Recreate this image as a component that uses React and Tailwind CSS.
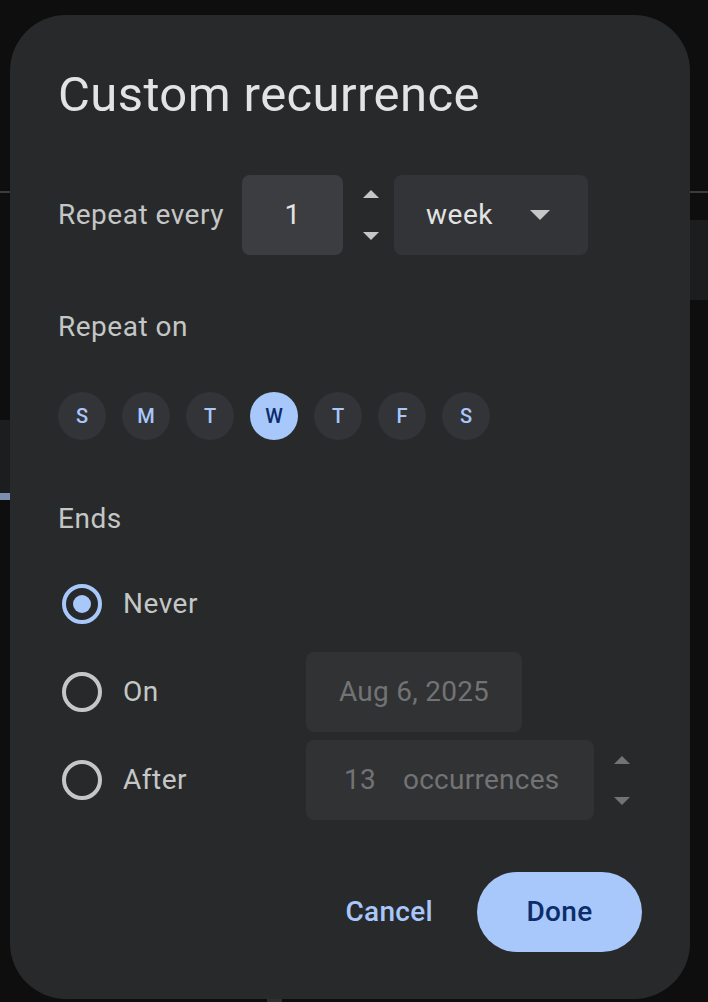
import React from "react";

const Tri = ({ up = false, w = 16, h = 8, color = "#c4c7c5" }) => (
  <svg width={w} height={h} viewBox={`0 0 ${w} ${h}`} className="block">
    {up ? (
      <polygon points={`0,${h} ${w / 2},0 ${w},${h}`} fill={color} />
    ) : (
      <polygon points={`0,0 ${w},0 ${w / 2},${h}`} fill={color} />
    )}
  </svg>
);

const Spinner = ({ color, gap }) => (
  <div className="flex flex-col items-center" style={{ gap }}>
    <Tri up color={color} />
    <Tri color={color} />
  </div>
);

const Radio = ({ checked }) => (
  <div className="w-[48px] h-[48px] shrink-0 flex items-center justify-center">
    {checked ? (
      <div className="w-[40px] h-[40px] rounded-full border-[4px] border-[#a8c7fa] flex items-center justify-center">
        <div className="w-[18px] h-[18px] rounded-full bg-[#a8c7fa]" />
      </div>
    ) : (
      <div className="w-[40px] h-[40px] rounded-full border-[4px] border-[#c4c7c5]" />
    )}
  </div>
);

const days = ["S", "M", "T", "W", "T", "F", "S"];

export default function App() {
  return (
    <div
      className="relative w-[708px] h-[1002px] bg-[#0e0e0e] overflow-hidden flex flex-col"
      style={{ fontFamily: "Roboto, 'Liberation Sans', sans-serif" }}
    >
      {/* background page behind the modal */}
      <div className="h-[191px]" />
      <div className="h-[2px] bg-[#3a3b3d]" />
      <div className="flex justify-between">
        <div className="w-[10px] mt-[227px] flex flex-col">
          <div className="h-[73px] bg-[#1c1d1f]" />
          <div className="h-[7px] bg-[#7d8db0]" />
        </div>
        <div className="w-[18px] mt-[27px] h-[80px] bg-[#1c1d1f]" />
      </div>
      <div className="mt-auto ml-[267px] w-[15px] h-[3px] bg-[#2e2f31]" />

      {/* modal dialog */}
      <div className="absolute left-[10px] top-[15px] w-[680px] h-[984px] rounded-[56px] bg-[#28292b] px-[48px] pt-[48px] flex flex-col tracking-[0.5px]">
        <div className="text-[49px] leading-[64px] tracking-[0.4px] text-[#e3e3e3]">Custom recurrence</div>

        <div className="mt-[48px] flex items-center h-[80px]">
          <div className="w-[184px] shrink-0 text-[28px] leading-[40px] text-[#c4c7c5]">Repeat every</div>
          <div className="w-[101px] shrink-0 h-[80px] rounded-[8px] bg-[#3c3d40] flex items-center justify-center text-[28px] text-[#e3e3e3]">
            1
          </div>
          <div className="w-[51px] shrink-0 flex justify-center pl-[4px]">
            <Spinner color="#c4c7c5" gap="34px" />
          </div>
          <div className="w-[194px] shrink-0 h-[80px] rounded-[8px] bg-[#333437] flex items-center pl-[32px] pr-[38px] justify-between">
            <span className="text-[28px] text-[#e3e3e3]">week</span>
            <Tri w={20} h={10} color="#c4c7c5" />
          </div>
        </div>

        <div className="mt-[52px] text-[28px] leading-[40px] text-[#c4c7c5]">Repeat on</div>

        <div className="mt-[45px] flex gap-[16px] tracking-normal">
          {days.map((d, i) =>
            i === 3 ? (
              <div
                key={i}
                className="w-[48px] h-[48px] rounded-full bg-[#a8c7fa] flex items-center justify-center text-[20px] font-medium text-[#0b2d6b]"
              >
                {d}
              </div>
            ) : (
              <div
                key={i}
                className="w-[48px] h-[48px] rounded-full bg-[#333437] flex items-center justify-center text-[20px] font-medium text-[#a8c7fa]"
              >
                {d}
              </div>
            )
          )}
        </div>

        <div className="mt-[59px] text-[28px] leading-[40px] text-[#c4c7c5]">Ends</div>

        <div className="mt-[25px] flex flex-col gap-[8px]">
          <div className="h-[80px] flex items-center">
            <Radio checked />
            <span className="ml-[17px] text-[28px] text-[#c4c7c5]">Never</span>
          </div>
          <div className="h-[80px] flex items-center">
            <Radio />
            <span className="ml-[17px] w-[183px] shrink-0 text-[28px] text-[#c4c7c5]">On</span>
            <div className="w-[216px] shrink-0 h-[80px] rounded-[8px] bg-[#313234] flex items-center pl-[33px] text-[28px] tracking-[0.25px] text-[#727375]">
              Aug 6, 2025
            </div>
          </div>
          <div className="h-[80px] flex items-center">
            <Radio />
            <span className="ml-[17px] w-[183px] shrink-0 text-[28px] text-[#c4c7c5]">After</span>
            <div className="w-[288px] shrink-0 h-[80px] rounded-[8px] bg-[#313234] flex items-center pl-[38px] text-[28px] tracking-[0.25px] text-[#727375]">
              <span>13</span>
              <span className="ml-[27px]">occurrences</span>
            </div>
            <div className="w-[48px] shrink-0 flex justify-start pl-[20px]">
              <Spinner color="#727375" gap="33px" />
            </div>
          </div>
        </div>

        <div className="mt-[52px] flex justify-end items-center gap-[20px]">
          <button className="h-[80px] px-[24px] rounded-full text-[28px] font-medium text-[#a8c7fa] tracking-[0.3px]">
            Cancel
          </button>
          <button className="w-[165px] h-[80px] rounded-full bg-[#a8c7fa] text-[28px] font-medium text-[#0b2d6b] tracking-[0.3px]">
            Done
          </button>
        </div>
      </div>
    </div>
  );
}
